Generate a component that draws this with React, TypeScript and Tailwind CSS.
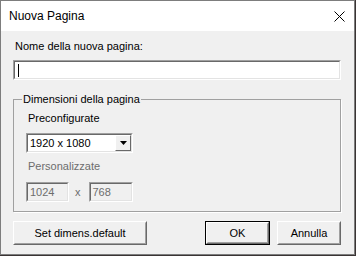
import React from 'react';

const font = { fontFamily: '"Liberation Sans", Arial, sans-serif' };

const Sunken: React.FC<{ className?: string; disabled?: boolean; children?: React.ReactNode }> = ({
  className = '',
  disabled,
  children,
}) => (
  <div
    className={`border border-t-[#a0a0a0] border-l-[#a0a0a0] border-b-white border-r-white ${className}`}
  >
    <div
      className={`h-full border border-t-[#696969] border-l-[#696969] border-b-[#e3e3e3] border-r-[#e3e3e3] flex items-center ${
        disabled ? 'bg-[#f0f0f0] text-[#6d6d6d]' : 'bg-white text-black'
      }`}
    >
      {children}
    </div>
  </div>
);

const Button: React.FC<{ label: string; className?: string; isDefault?: boolean }> = ({
  label,
  className = '',
  isDefault,
}) => (
  <div className={`h-[24px] ${isDefault ? 'border border-black' : ''} ${className}`}>
    <div className="h-full border border-t-white border-l-white border-b-[#696969] border-r-[#696969]">
      <div className="h-full border border-t-[#f0f0f0] border-l-[#f0f0f0] border-b-[#a0a0a0] border-r-[#a0a0a0] bg-[#f0f0f0] flex items-center justify-center text-[11px] text-black">
        {label}
      </div>
    </div>
  </div>
);

export default function App() {
  return (
    <div className="w-[356px] h-[256px] bg-[#3a3434] overflow-hidden" style={font}>
      <div className="w-[355px] h-[255px] border border-[#7d7d7d] bg-[#f0f0f0] flex flex-col">
        {/* title bar */}
        <div className="h-[30px] bg-white flex items-center justify-between pl-[8px] pr-[8px]">
          <span className="text-[12px] text-black">Nuova Pagina</span>
          <svg width="11" height="11" viewBox="0 0 11 11" className="mr-[1px]">
            <path d="M0.5 0.5 L10.5 10.5 M10.5 0.5 L0.5 10.5" stroke="#000" strokeWidth="1" />
          </svg>
        </div>

        {/* client */}
        <div className="flex flex-col pl-[12px] pr-[13px] text-[11px] leading-[13px]">
          <div className="mt-[9px] pl-[2px] text-black">Nome della nuova pagina:</div>
          <Sunken className="mt-[7px] h-[20px]">
            <div className="ml-[3px] w-[1px] h-[13px] bg-black" />
          </Sunken>

          <fieldset className="mt-[13px] border border-[#a0a0a0] shadow-[1px_1px_0_#fff] pl-[12px] pb-[9px]">
            <legend className="ml-[-4px] px-[1px] text-black leading-[13px]">Dimensioni della pagina</legend>
            <div className="mt-[6px] pl-[2px] text-black">Preconfigurate</div>
            <Sunken className="mt-[8px] w-[107px] h-[20px]">
              <div className="flex-1 pl-[2px] text-black">1920 x 1080</div>
              <div className="w-[16px] h-[16px] border border-t-white border-l-white border-b-[#696969] border-r-[#696969] bg-[#f0f0f0] flex items-center justify-center">
                <svg width="7" height="4" viewBox="0 0 7 4">
                  <path d="M0 0 H7 L3.5 4 Z" fill="#000" />
                </svg>
              </div>
            </Sunken>
            <div className="mt-[7px] pl-[2px] text-[#6d6d6d]">Personalizzate</div>
            <div className="mt-[9px] flex items-center">
              <Sunken disabled className="w-[43px] h-[20px]">
                <span className="pl-[2px]">1024</span>
              </Sunken>
              <span className="ml-[6px] mr-[8px] text-[#6d6d6d]">x</span>
              <Sunken disabled className="w-[44px] h-[20px]">
                <span className="pl-[2px]">768</span>
              </Sunken>
            </div>
          </fieldset>

          <div className="mt-[9px] flex items-center">
            <Button label="Set dimens.default" className="w-[134px]" />
            <Button label="OK" isDefault className="ml-auto w-[65px]" />
            <Button label="Annulla" className="ml-[7px] w-[64px]" />
          </div>
        </div>
      </div>
    </div>
  );
}
